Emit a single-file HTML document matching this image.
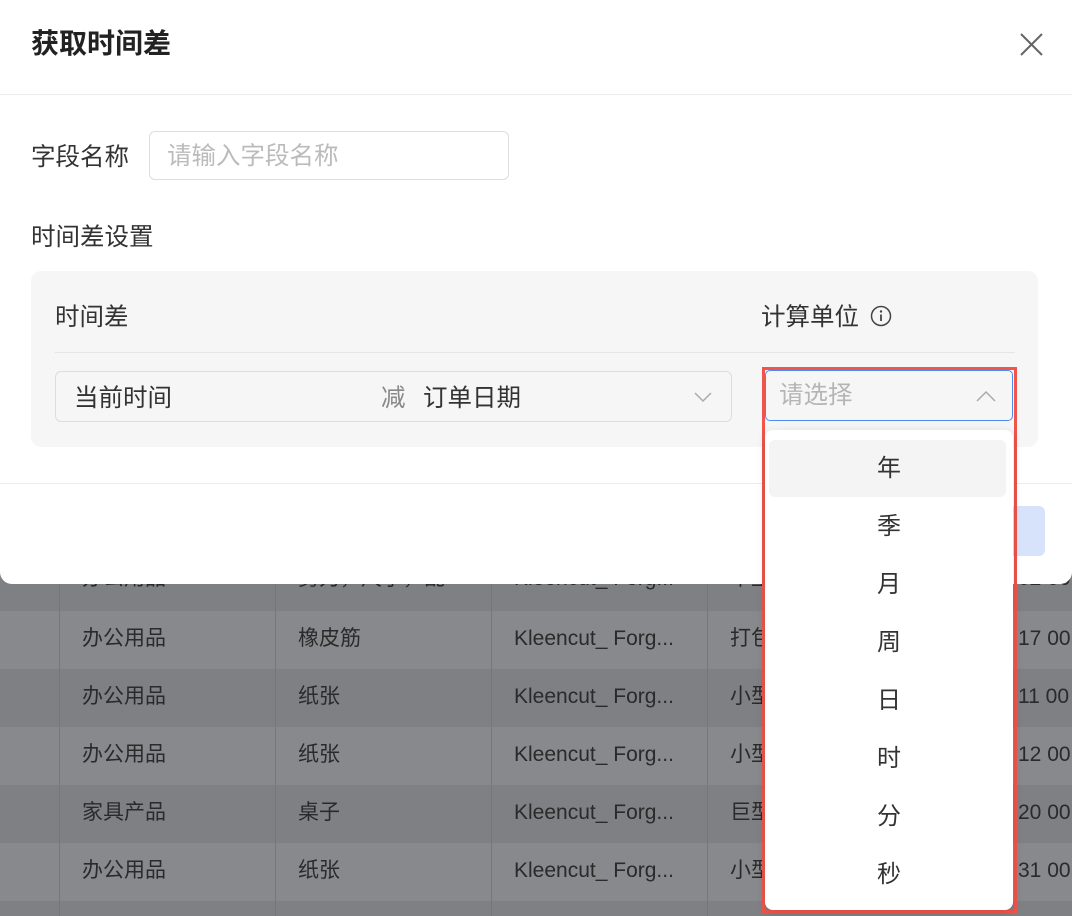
<!DOCTYPE html>
<html style="width:1072px;height:916px;overflow:hidden"><head><meta charset="utf-8"><style>
*{box-sizing:border-box;margin:0;padding:0}
body{width:1072px;height:916px;overflow:hidden;position:relative;font-family:"Liberation Sans","Noto Sans CJK SC",sans-serif;background:#838488;color:#333}
.row{position:absolute;left:0;width:1072px;height:58px;font-size:21px;color:#2a2a2a}
.row span{position:absolute;top:14px;line-height:28px}
.vl{position:absolute;top:553px;bottom:0;width:1px;background:#76777b}
.modal{position:absolute;left:0;top:0;width:1072px;height:584px;background:#fff;border-radius:0 0 12px 12px}
.abs{position:absolute;line-height:1.2}
</style></head><body>
<div class="row" style="top:553px;background:#7f8084"><span style="left:82px;top:12px">办公用品</span><span style="left:298px;top:12px">剪刀，尺子，乱</span><span style="left:514px;top:12px">Kleencut_ Forg...</span><span style="left:730px;top:12px">中型</span><span style="left:1018px;top:12px">02 00</span></div>
<div class="row" style="top:611px;background:#88898c"><span style="left:82px">办公用品</span><span style="left:298px">橡皮筋</span><span style="left:514px">Kleencut_ Forg...</span><span style="left:730px">打包</span><span style="left:1018px">17 00</span></div>
<div class="row" style="top:669px;background:#7f8084"><span style="left:82px">办公用品</span><span style="left:298px">纸张</span><span style="left:514px">Kleencut_ Forg...</span><span style="left:730px">小型</span><span style="left:1018px">11 00</span></div>
<div class="row" style="top:727px;background:#88898c"><span style="left:82px">办公用品</span><span style="left:298px">纸张</span><span style="left:514px">Kleencut_ Forg...</span><span style="left:730px">小型</span><span style="left:1018px">12 00</span></div>
<div class="row" style="top:785px;background:#7f8084"><span style="left:82px">家具产品</span><span style="left:298px">桌子</span><span style="left:514px">Kleencut_ Forg...</span><span style="left:730px">巨型</span><span style="left:1018px">20 00</span></div>
<div class="row" style="top:843px;background:#88898c"><span style="left:82px">办公用品</span><span style="left:298px">纸张</span><span style="left:514px">Kleencut_ Forg...</span><span style="left:730px">小型</span><span style="left:1018px">31 00</span></div>
<div class="row" style="top:901px;background:#7f8084"></div>
<div class="vl" style="left:59px"></div><div class="vl" style="left:275px"></div><div class="vl" style="left:491px"></div><div class="vl" style="left:707px"></div>

<div class="modal">
 <div class="abs" style="left:31px;top:27px;font-size:28px;font-weight:bold;color:#222">获取时间差</div>
 <svg class="abs" style="left:1019px;top:32px" width="25" height="25" viewBox="0 0 25 25"><path d="M2 2L23 23M23 2L2 23" stroke="#666" stroke-width="2"/></svg>
 <div class="abs" style="left:0;top:94px;width:1072px;height:1px;background:#ececec"></div>
 <div class="abs" style="left:31px;top:143px;font-size:24.5px">字段名称</div>
 <div class="abs" style="left:149px;top:131px;width:360px;height:49px;border:1px solid #ddd;border-radius:6px;font-size:24.5px;color:#bbb;padding:10px 17px">请输入字段名称</div>
 <div class="abs" style="left:31px;top:223px;font-size:24.5px">时间差设置</div>
 <div class="abs" style="left:31px;top:271px;width:1007px;height:176px;background:#f6f6f6;border-radius:10px"></div>
 <div class="abs" style="left:55px;top:303px;font-size:24.5px">时间差</div>
 <div class="abs" style="left:761px;top:303px;font-size:24.5px">计算单位</div>
 <svg class="abs" style="left:870px;top:305px" width="22" height="22" viewBox="0 0 22 22"><circle cx="11" cy="11" r="9.5" fill="none" stroke="#444" stroke-width="1.5"/><circle cx="11" cy="6.5" r="1.2" fill="#444"/><path d="M11 9.5V16" stroke="#444" stroke-width="1.8"/></svg>
 <div class="abs" style="left:55px;top:352px;width:960px;height:1px;background:#e5e5e5"></div>
 <div class="abs" style="left:55px;top:371px;width:677px;height:51px;border:1px solid #ddd;border-radius:6px;background:#f6f6f6"></div>
 <div class="abs" style="left:74px;top:384px;font-size:24.5px">当前时间</div>
 <div class="abs" style="left:381px;top:384px;font-size:24.5px;color:#888">减</div>
 <div class="abs" style="left:423px;top:384px;font-size:24.5px">订单日期</div>
 <svg class="abs" style="left:694px;top:391px" width="18" height="12" viewBox="0 0 18 12"><path d="M1 2L9 10L17 2" fill="none" stroke="#aaa" stroke-width="1.5"/></svg>
 <div class="abs" style="left:0;top:483px;width:1072px;height:1px;background:#ececec"></div>
 <div class="abs" style="left:1000px;top:506px;width:45px;height:50px;background:#d7e3fa;border-radius:6px"></div>
</div>

<div class="abs" style="left:762px;top:367px;width:255px;height:546px;border:3px solid #f0544b"></div>
<div class="abs" style="left:765px;top:370px;width:248px;height:51px;border:1px solid #4b8cf2;border-radius:5px;background:#f6f6f6;font-size:24.5px;color:#b5b5b5;padding:10px 13px">请选择</div>
<svg class="abs" style="left:976px;top:390px" width="20" height="13" viewBox="0 0 20 13"><path d="M1 11L10 2L19 11" fill="none" stroke="#aaa" stroke-width="1.5"/></svg>
<div class="abs" style="left:765px;top:430px;width:248px;height:480px;background:#fff;border-radius:8px;box-shadow:0 2px 10px rgba(0,0,0,.12)"></div>
<div class="abs" style="left:769px;top:440px;width:237px;height:57px;background:#f4f4f4;border-radius:6px"></div>
<div class="abs" style="left:765px;top:440px;width:248px;font-size:24px;color:#333;text-align:center;line-height:58px">年<br>季<br>月<br>周<br>日<br>时<br>分<br>秒</div>
</body></html>
